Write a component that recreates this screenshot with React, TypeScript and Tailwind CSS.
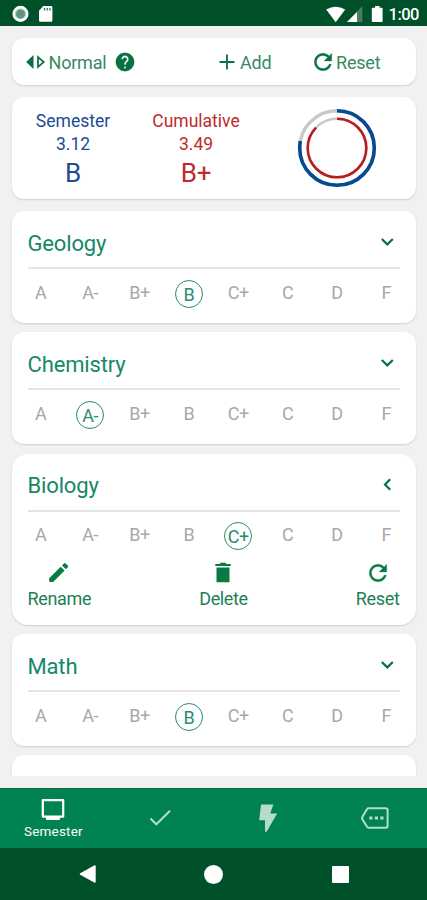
import React from "react";

const GRADES = ["A", "A-", "B+", "B", "C+", "C", "D", "F"];
const REFRESH =
  "M17.65 6.35C16.2 4.9 14.21 4 12 4c-4.42 0-7.99 3.58-7.99 8s3.57 8 7.99 8c3.73 0 6.84-2.55 7.73-6h-2.08c-.82 2.33-3.04 4-5.65 4-3.31 0-6-2.69-6-6s2.69-6 6-6c1.66 0 3.14.69 4.22 1.78L13 11h7V4l-2.35 2.35z";
const HELP =
  "M12 2C6.48 2 2 6.48 2 12s4.48 10 10 10 10-4.48 10-10S17.52 2 12 2zm1 17h-2v-2h2v2zm2.07-7.75l-.9.92C13.45 12.9 13 13.5 13 15h-2v-.5c0-1.1.45-2.1 1.17-2.83l1.24-1.26c.37-.36.59-.86.59-1.41 0-1.1-.9-2-2-2s-2 .9-2 2H8c0-2.21 1.79-4 4-4s4 1.79 4 4c0 .88-.36 1.68-.93 2.25z";

function Card({ className, children }: { className: string; children?: React.ReactNode }) {
  return (
    <div className={`mx-auto w-[404px] shrink-0 bg-white shadow-[0_1px_2px_rgba(0,0,0,0.14)] ${className}`}>
      {children}
    </div>
  );
}

function Icon({ d, size, className = "" }: { d: string; size: number; className?: string }) {
  return (
    <svg
      width={size}
      height={size}
      viewBox="0 0 24 24"
      fill="currentColor"
      stroke="currentColor"
      strokeWidth="0.3"
      className={`shrink-0 ${className}`}
    >
      <path d={d} />
    </svg>
  );
}

function StatusBar() {
  return (
    <div className="flex h-[26px] shrink-0 items-center bg-[#00502a] pl-3 pr-[8px] text-white">
      <svg width="17" height="17" viewBox="0 0 17 17">
        <circle cx="8.5" cy="8.9" r="6.6" fill="#5d9480" stroke="#fff" strokeWidth="2.9" />
        <circle cx="8.5" cy="8.9" r="5" fill="none" stroke="#b9d2c6" strokeWidth="1" />
      </svg>
      <svg width="14" height="16" viewBox="0 0 14 16" className="ml-[10px] mt-[2px]">
        <path d="M4.3 0H12q1.4 0 1.4 1.4v13q0 1.4-1.4 1.4H1.3Q0 15.8 0 14.4V4.8z" fill="#fff" />
        <path d="M5.5 2v2.4M8.2 2v2.4M10.9 2v2.4" stroke="#2f6d4c" strokeWidth="1.3" />
      </svg>
      <svg width="58" height="17" viewBox="0 0 58 17" className="ml-auto mt-[2px]">
        <path d="M.2 3.5Q9.7-2.2 19.2 3.5L9.7 16.3z" fill="#fff" />
        <path d="M36.3 0v16H21z" fill="#44805f" />
        <path d="M31 6v10H21z" fill="#fff" />
        <path d="M47 1.8h2V0h4.6v1.8h2q1 0 1 1V15q0 1-1 1h-8.8q-1 0-1-1V2.8q0-1 1-1z" fill="#fff" />
      </svg>
      <span className="ml-[5px] mt-[4px] text-[16.5px] font-medium leading-none tracking-[-0.5px]">1:00</span>
    </div>
  );
}

function Chevron({ open }: { open?: boolean }) {
  return (
    <svg width="14" height="14" viewBox="0 0 14 14" fill="none" stroke="#087141" strokeWidth="2.2" className="-mt-[2px]">
      <path d={open ? "M10.2 1.2L5 6.5l5.2 5.3" : "M1.8 4L7.3 9.4 12.8 4"} />
    </svg>
  );
}

function Course({ name, grade, open }: { name: string; grade: string; open?: boolean }) {
  return (
    <Card className={open ? "mt-[10px] h-[171px] rounded-[16px]" : "mt-[9.5px] h-[111.5px] rounded-[12px]"}>
      <div className="mx-4 flex h-[58px] items-center justify-between border-b-2 border-[#e5e5e5] pr-[6px] pt-[8px]">
        <span className="mt-px text-[22px] leading-6 tracking-[-0.15px] text-[#168768]">{name}</span>
        <Chevron open={open} />
      </div>
      <div
        className={`grid grid-cols-8 px-[4.5px] text-[18px] tracking-[-0.5px] text-[#a8a8a8] ${open ? "pt-[10px]" : "pt-[11px]"}`}
      >
        {GRADES.map((g) =>
          g === grade ? (
            <span
              key={g}
              className="flex size-[28px] items-center justify-center justify-self-center rounded-full border border-[#278d70] pt-px text-[#278d70]"
            >
              {g}
            </span>
          ) : (
            <span key={g} className="text-center leading-[26px]">
              {g}
            </span>
          )
        )}
      </div>
      {open && (
        <div className="mx-4 mt-[11px] flex justify-between text-[18px] leading-[22px] tracking-[-0.35px] text-[#227f55]">
          <div className="flex flex-col items-center">
            <svg width="22" height="22" viewBox="0 0 22 22" fill="#087a43" className="mb-[5px]">
              <path d="M1.2 17.2L12.7 5.7l3.9 3.9L5.1 21.1H2.2q-1 0-1-1zM14 4.4l2-2q.8-.8 1.6 0l2.3 2.3q.8.8 0 1.6l-2 2z" />
            </svg>
            Rename
          </div>
          <div className="flex flex-col items-center">
            <svg width="22" height="22" viewBox="0 0 22 22" fill="#087a43" className="mb-[5px]">
              <path d="M3.3 3h4.2l1.2-1.3h4.6L14.5 3h4.2v2H3.3zM4.5 6.4h13v14.8h-13z" />
            </svg>
            Delete
          </div>
          <div className="flex flex-col items-center">
            <Icon d={REFRESH} size={26} className="-mt-[1px] mb-[2px] text-[#087a43]" />
            Reset
          </div>
        </div>
      )}
    </Card>
  );
}

function Summary({ label, gpa, grade, className }: { label: string; gpa: string; grade: string; className: string }) {
  return (
    <div className={`flex flex-col items-center pt-[13px] ${className}`}>
      <span className="text-[17.5px] leading-[22px]">{label}</span>
      <span className="text-[17.5px] leading-[24px]">{gpa}</span>
      <span className="mt-[2px] text-[26px] leading-[30px] tracking-[-0.3px]">{grade}</span>
    </div>
  );
}

function Rings() {
  return (
    <svg width="80" height="80" viewBox="0 0 80 80" fill="none">
      <circle cx="40" cy="40" r="37.3" stroke="#c9c9c9" strokeWidth="3.4" />
      <circle cx="40" cy="40" r="29.3" stroke="#c9c9c9" strokeWidth="2.4" />
      <g transform="rotate(-90 40 40)">
        <circle cx="40" cy="40" r="37.3" stroke="#064a94" strokeWidth="3.6" pathLength="100" strokeDasharray="78 100" />
        <circle cx="40" cy="40" r="29.3" stroke="#b91d1d" strokeWidth="2.6" pathLength="100" strokeDasharray="87.3 100" />
      </g>
    </svg>
  );
}

function BottomTabs() {
  return (
    <div className="grid h-[60px] shrink-0 grid-cols-4 items-center justify-items-center border-t border-[#087044] bg-[#008252] text-[#b5dccb]">
      <div className="flex flex-col items-center text-white">
        <svg width="24" height="22" viewBox="0 0 24 22">
          <path d="M1.8 1.1h20.4v16.5H1.8z" fill="none" stroke="currentColor" strokeWidth="2.2" strokeLinejoin="round" />
          <path d="M5 17h14v3q0 1-1 1H6q-1 0-1-1z" fill="currentColor" />
        </svg>
        <span className="mt-[2px] text-[13.5px] leading-[16px] tracking-[0.2px]">Semester</span>
      </div>
      <svg width="24" height="18" viewBox="0 0 24 18" fill="none" stroke="currentColor" strokeWidth="2" className="-mt-[2px]">
        <path d="M2.5 9.5l5.8 5.8L22 1.8" />
      </svg>
      <svg width="20" height="30" viewBox="0 0 20 30" fill="currentColor" className="-mt-[2px] ml-[2px]">
        <path d="M3 1.5h12.3l-3 9H19.2L8.6 28.8H7V17.3H1.2z" />
      </svg>
      <svg
        width="30"
        height="24"
        viewBox="0 0 30 24"
        fill="none"
        stroke="currentColor"
        strokeWidth="2"
        strokeLinejoin="round"
        className="-mt-[2px] ml-[2px]"
      >
        <path d="M8.5 2.3h17.3q1.8 0 1.8 1.8v15.8q0 1.8-1.8 1.8H8.5Q7.5 21.7 7 20.8L2.3 13q-.6-1 0-2L7 3.2Q7.5 2.3 8.5 2.3z" />
        <path d="M9.3 12h3.2M14.8 12H18M20.3 12h3.2" strokeWidth="3.2" />
      </svg>
    </div>
  );
}

export default function App() {
  return (
    <div className="flex h-[900px] w-[427px] flex-col overflow-hidden bg-[#f1f1f1] font-['Roboto',sans-serif]">
      <StatusBar />
      <main className="flex h-[750px] shrink-0 flex-col overflow-hidden">
        <Card className="mt-3 flex h-[47px] items-center rounded-[12px] pl-[14px] text-[18px] tracking-[-0.2px] text-[#388962]">
          <svg width="20" height="16" viewBox="0 0 20 16" className="text-[#087141]">
            <path d="M7.5 1v14L.2 8z" fill="currentColor" />
            <path d="M12 3v10l5.8-5z" fill="none" stroke="currentColor" strokeWidth="1.7" />
          </svg>
          <span className="ml-[3px] mt-[2px] w-[57px]">Normal</span>
          <Icon d={HELP} size={22} className="ml-[8px] text-[#087141]" />
          <svg width="16" height="16" viewBox="0 0 16 16" className="ml-[83.5px] text-[#087141]">
            <path d="M8 .5v15M.5 8h15" stroke="currentColor" strokeWidth="1.8" />
          </svg>
          <span className="ml-[5px] mt-[2px] w-[32px]">Add</span>
          <Icon d={REFRESH} size={26} className="ml-[38px] text-[#087141]" />
          <span className="mt-[2px]">Reset</span>
        </Card>
        <Card className="mt-3 flex h-[102px] rounded-[12px]">
          <Summary label="Semester" gpa="3.12" grade="B" className="w-[123px] text-[#204b96]" />
          <Summary label="Cumulative" gpa="3.49" grade="B+" className="w-[123px] text-[#bd2b2b]" />
          <div className="ml-[39px] flex items-center">
            <Rings />
          </div>
        </Card>
        <div className="h-[2.5px] shrink-0" />
        <Course name="Geology" grade="B" />
        <Course name="Chemistry" grade="A-" />
        <Course name="Biology" grade="C+" open />
        <Course name="Math" grade="B" />
        <Card className="mt-[9px] h-[40px] rounded-[12px]" />
      </main>
      <div className="h-[12px] shrink-0" />
      <BottomTabs />
      <nav className="flex h-[52px] shrink-0 items-center bg-[#00502a] pl-[79px]">
        <svg width="18" height="20" viewBox="0 0 18 20" fill="#fff">
          <path d="M15.7 1.2q1 0 1 1v15.6q0 1-1 1L1.2 10.8q-1.2-.8 0-1.6z" />
        </svg>
        <div className="ml-[107px] size-[19px] rounded-full bg-white" />
        <div className="ml-[109px] size-[17px] rounded-[1px] bg-white" />
      </nav>
    </div>
  );
}
